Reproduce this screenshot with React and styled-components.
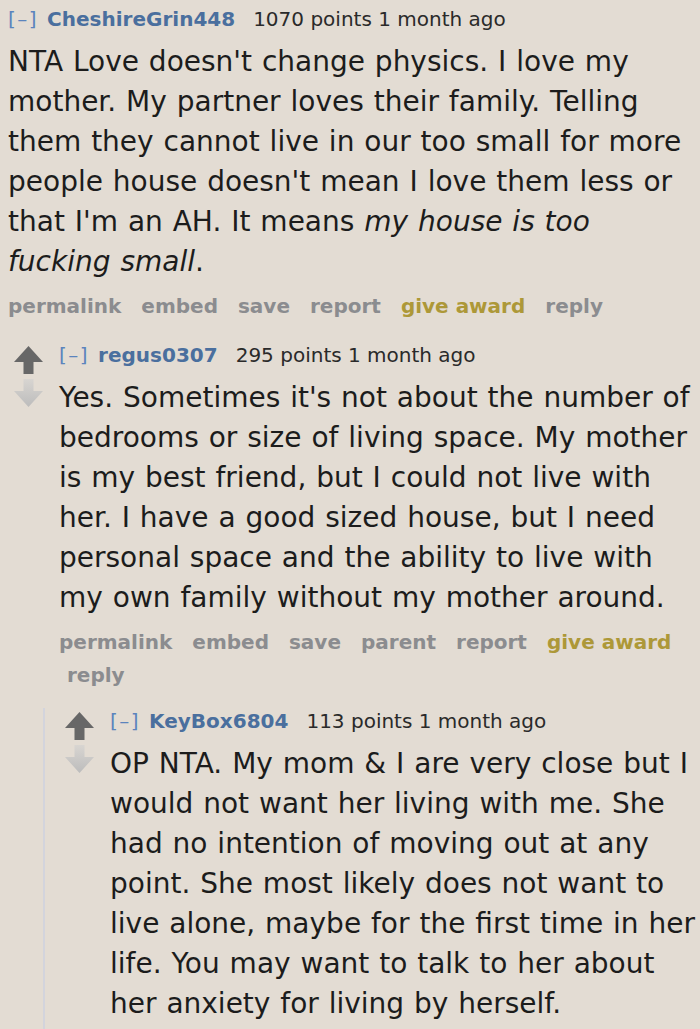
import styled, { createGlobalStyle } from "styled-components";

const GlobalStyle = createGlobalStyle`
  html, body {
    margin: 0;
    padding: 0;
    background: #e3dcd3;
    overflow-x: hidden;
  }
  body {
    font-family: "DejaVu Sans", Verdana, sans-serif;
    color: #1c1c1c;
  }
`;

const Page = styled.div`
  padding-top: 6px;
  margin-left: -37px;
  padding-right: 3px;
`;

const CommentRow = styled.div`
  display: flex;
  flex-direction: column;
`;

const Main = styled.div`
  display: flex;
  align-items: flex-start;
`;

const MidCol = styled.div`
  width: 29px;
  flex: 0 0 29px;
  margin-right: 16px;
  padding-top: 4px;
  display: flex;
  flex-direction: column;
  gap: 5px;
`;

const Entry = styled.div`
  flex: 1;
  min-width: 0;
`;

const Tagline = styled.div`
  font-size: 20px;
  line-height: 26px;
  color: #2a2a2a;
  white-space: nowrap;
`;

const Expand = styled.span`
  color: #5b84bd;
  letter-spacing: 1.5px;
  margin-right: 9px;
`;

const Author = styled.span`
  color: #4a6f9e;
  font-weight: bold;
  margin-right: 18px;
`;

const Body = styled.div`
  font-size: 28px;
  line-height: 40px;
  word-spacing: 1px;
  margin: 10px 0 8px;
  color: #1c1c1c;
  em {
    font-style: italic;
  }
`;

const Buttons = styled.ul`
  list-style: none;
  margin: 0;
  padding: 0;
  display: flex;
  flex-wrap: wrap;
  font-size: 20px;
  line-height: 33px;
  font-weight: bold;
`;

const Button = styled.li`
  padding: 0 12px 0 8px;
  color: ${(p) => (p.$gold ? "#ad9838" : "#8b8c8f")};
  &:first-child {
    padding-left: 0;
  }
`;

const Child = styled.div`
  margin-left: 29px;
  margin-top: ${(p) => p.$top}px;
  border-left: 2px solid #d3d4dc;
  padding-left: 20px;
`;

const Arrow = ({ down }) => (
  <svg width="29" height="28" viewBox="0 0 29 28">
    <defs>
      <linearGradient id="downfade" x1="0" y1="0" x2="0" y2="1">
        <stop offset="0" stopColor="#d8d5d1" />
        <stop offset="1" stopColor="#bcbcbc" />
      </linearGradient>
    </defs>
    {down ? (
      <path d="M9.5 0 H19.5 V12 H29 L14.5 28 L0 12 H9.5 Z" fill="url(#downfade)" />
    ) : (
      <path d="M14.5 0 L29 16 H19.5 V28 H9.5 V16 H0 Z" fill="#676767" />
    )}
  </svg>
);

const Comment = ({ author, points, body, buttons, childTop, children }) => (
  <CommentRow>
    <Main>
      <MidCol>
        <Arrow />
        <Arrow down />
      </MidCol>
      <Entry>
        <Tagline>
          <Expand>[–]</Expand>
          <Author>{author}</Author>
          {points} points 1 month ago
        </Tagline>
        <Body>{body}</Body>
        <Buttons>
          {buttons.map((b) => (
            <Button key={b} $gold={b === "give award"}>
              {b}
            </Button>
          ))}
        </Buttons>
      </Entry>
    </Main>
    {children && <Child $top={childTop}>{children}</Child>}
  </CommentRow>
);

export default function App() {
  return (
    <>
      <GlobalStyle />
      <Page>
        <Comment
          author="CheshireGrin448"
          points="1070"
          childTop={19}
          buttons={["permalink", "embed", "save", "report", "give award", "reply"]}
          body={
            <>
              NTA Love doesn't change physics. I love my mother. My partner loves
              their family. Telling them they cannot live in our too small for more
              people house doesn't mean I love them less or that I'm an AH. It means{" "}
              <em>my house is too fucking small</em>.
            </>
          }
        >
          <Comment
            author="regus0307"
            points="295"
            childTop={16}
            buttons={["permalink", "embed", "save", "parent", "report", "give award", "reply"]}
            body="Yes. Sometimes it's not about the number of bedrooms or size of living space. My mother is my best friend, but I could not live with her. I have a good sized house, but I need personal space and the ability to live with my own family without my mother around."
          >
            <Comment
              author="KeyBox6804"
              points="113"
              buttons={["permalink", "embed", "save", "parent", "report", "give award", "reply"]}
              body="OP NTA. My mom & I are very close but I would not want her living with me. She had no intention of moving out at any point. She most likely does not want to live alone, maybe for the first time in her life. You may want to talk to her about her anxiety for living by herself."
            />
          </Comment>
        </Comment>
      </Page>
    </>
  );
}
